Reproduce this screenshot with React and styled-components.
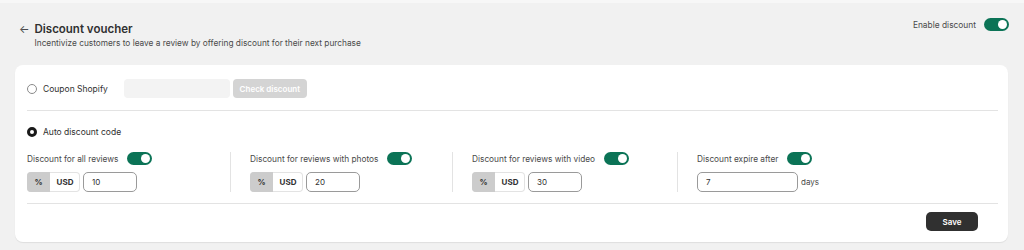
import React from 'react';
import styled, { createGlobalStyle } from 'styled-components';

const Global = createGlobalStyle`
  body {
    margin: 0;
    background: #f1f1f1;
    font-family: Inter, "Noto Sans", sans-serif;
    color: #303030;
  }
`;

const Page = styled.div`
  border-top: 3px solid #f7f7f7;
  padding: 17px 15px 8px 15px;
  width: 1024px;
  box-sizing: border-box;
`;

const Header = styled.div`
  display: flex;
  justify-content: space-between;
  align-items: flex-start;
  padding-left: 4px;
`;

const TitleBlock = styled.div`
  display: flex;
  align-items: flex-start;
  gap: 5px;
`;

const Back = styled.span`
  font-size: 11px;
  line-height: 18px;
  color: #4a4a4a;
`;

const Title = styled.h1`
  margin: 0;
  font-size: 11.5px;
  line-height: 18px;
  font-weight: 600;
`;

const Subtitle = styled.p`
  margin: -1px 0 0 0;
  font-size: 8.3px;
  line-height: 12px;
  color: #4a4a4a;
`;

const EnableRow = styled.div`
  display: flex;
  align-items: center;
  gap: 8px;
  font-size: 8.4px;
  color: #4a4a4a;
  margin-top: -2px;
`;

const Toggle = styled.span`
  display: inline-block;
  position: relative;
  width: 25px;
  height: 13px;
  border-radius: 7px;
  background: #0b7356;
  &::after {
    content: '';
    position: absolute;
    top: 2px;
    right: 2px;
    width: 9px;
    height: 9px;
    border-radius: 50%;
    background: #fff;
  }
`;

const Card = styled.div`
  margin-top: 16px;
  background: #fff;
  border-radius: 8px;
  box-shadow: 0 1px 1px rgba(0, 0, 0, 0.08);
  padding: 14px 10px 11px 12px;
  width: 993px;
  box-sizing: border-box;
`;

const OptionRow = styled.div`
  display: flex;
  align-items: center;
  gap: 6px;
  font-size: 8.5px;
  color: #303030;
  margin-top: ${p => p.top || 0}px;
`;

const Radio = styled.span`
  width: 10px;
  height: 10px;
  border-radius: 50%;
  box-sizing: border-box;
  border: ${p => (p.checked ? '3px solid #1a1a1a' : '1px solid #8a8a8a')};
  background: #fff;
`;

const CouponInput = styled.div`
  margin-left: 10px;
  width: 106px;
  height: 19px;
  border-radius: 4px;
  background: #f3f3f3;
`;

const CheckButton = styled.button`
  margin-left: -3px;
  height: 19px;
  width: 74px;
  border: none;
  border-radius: 4px;
  background: #d4d4d4;
  color: #fff;
  font-family: inherit;
  font-size: 8px;
  font-weight: 600;
  padding: 0;
`;

const Divider = styled.div`
  height: 1px;
  background: #e3e3e3;
  margin: ${p => p.margin};
`;

const Columns = styled.div`
  display: grid;
  grid-template-columns: 203px 222px 225px 1fr;
  margin-top: 15px;
`;

const Column = styled.div`
  padding-left: ${p => (p.first ? 0 : '19px')};
  border-left: ${p => (p.first ? 'none' : '1px solid #e3e3e3')};
`;

const LabelRow = styled.div`
  display: flex;
  align-items: center;
  gap: 9px;
  font-size: 8.3px;
  color: #4a4a4a;
  height: 13px;
`;

const FieldRow = styled.div`
  display: flex;
  align-items: center;
  gap: 3px;
  margin-top: 7px;
  font-size: 8px;
  color: #4a4a4a;
`;

const Segment = styled.div`
  display: flex;
  height: 20px;
  border-radius: 4px;
  overflow: hidden;
  box-shadow: inset 0 0 0 1px #e3e3e3;
`;

const SegItem = styled.span`
  width: ${p => p.width}px;
  display: flex;
  align-items: center;
  justify-content: center;
  font-size: 8px;
  font-weight: 700;
  color: #303030;
  background: ${p => (p.active ? '#cccccc' : 'transparent')};
`;

const Input = styled.div`
  width: ${p => p.width}px;
  height: 20px;
  box-sizing: border-box;
  border: 1px solid #9a9a9a;
  border-radius: 5px;
  font-size: 8px;
  color: #303030;
  display: flex;
  align-items: center;
  padding-left: 8px;
`;

const Footer = styled.div`
  display: flex;
  justify-content: flex-end;
  padding-right: 20px;
`;

const SaveButton = styled.button`
  width: 52px;
  height: 19px;
  border: none;
  border-radius: 5px;
  background: #303030;
  color: #fff;
  font-family: inherit;
  font-size: 8px;
  font-weight: 600;
  padding: 0;
`;

const discounts = [
  { label: 'Discount for all reviews', value: '10' },
  { label: 'Discount for reviews with photos', value: '20' },
  { label: 'Discount for reviews with video', value: '30' },
];

const App = () => (
  <Page>
    <Global />
    <Header>
      <TitleBlock>
        <Back>←</Back>
        <div>
          <Title>Discount voucher</Title>
          <Subtitle>Incentivize customers to leave a review by offering discount for their next purchase</Subtitle>
        </div>
      </TitleBlock>
      <EnableRow>
        Enable discount
        <Toggle />
      </EnableRow>
    </Header>
    <Card>
      <OptionRow>
        <Radio />
        Coupon Shopify
        <CouponInput />
        <CheckButton>Check discount</CheckButton>
      </OptionRow>
      <Divider margin="12px 0 0 0" />
      <OptionRow top={16}>
        <Radio checked />
        Auto discount code
      </OptionRow>
      <Columns>
        {discounts.map((d, i) => (
          <Column key={d.label} first={i === 0}>
            <LabelRow>
              {d.label}
              <Toggle />
            </LabelRow>
            <FieldRow>
              <Segment>
                <SegItem active width={23}>%</SegItem>
                <SegItem width={30}>USD</SegItem>
              </Segment>
              <Input width={54}>{d.value}</Input>
            </FieldRow>
          </Column>
        ))}
        <Column>
          <LabelRow>
            Discount expire after
            <Toggle />
          </LabelRow>
          <FieldRow>
            <Input width={101}>7</Input>
            days
          </FieldRow>
        </Column>
      </Columns>
      <Divider margin="11px 0 8px 0" />
      <Footer>
        <SaveButton>Save</SaveButton>
      </Footer>
    </Card>
  </Page>
);

export default App;
